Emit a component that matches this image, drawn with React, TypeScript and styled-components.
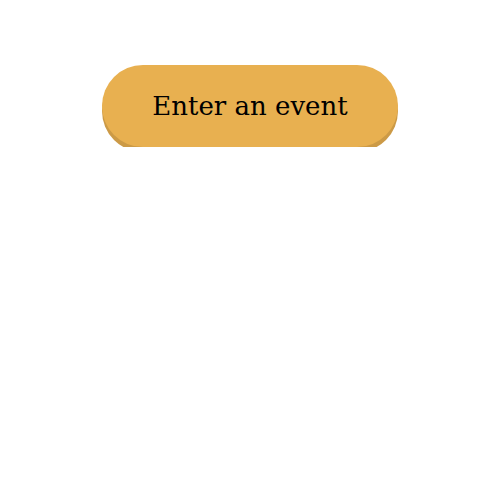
import React from "react";
import styled, { createGlobalStyle } from "styled-components";

const Global = createGlobalStyle`
  body { margin: 0; background: #ffffff; font-family: "DejaVu Serif", serif; }
`;

const Page = styled.div`
  display: flex;
  justify-content: center;
  padding-top: 65px;
`;

const EventButton = styled.button`
  width: 296px;
  height: 82px;
  padding: 0;
  border: none;
  border-radius: 41px;
  background: #e8b050;
  box-shadow: 0 5px 0 #cc9a46;
  font-family: "DejaVu Serif", serif;
  font-size: 26px;
  color: #000;
  cursor: pointer;
`;

export default function App() {
  return (
    <>
      <Global />
      <Page>
        <EventButton>Enter an event</EventButton>
      </Page>
    </>
  );
}
